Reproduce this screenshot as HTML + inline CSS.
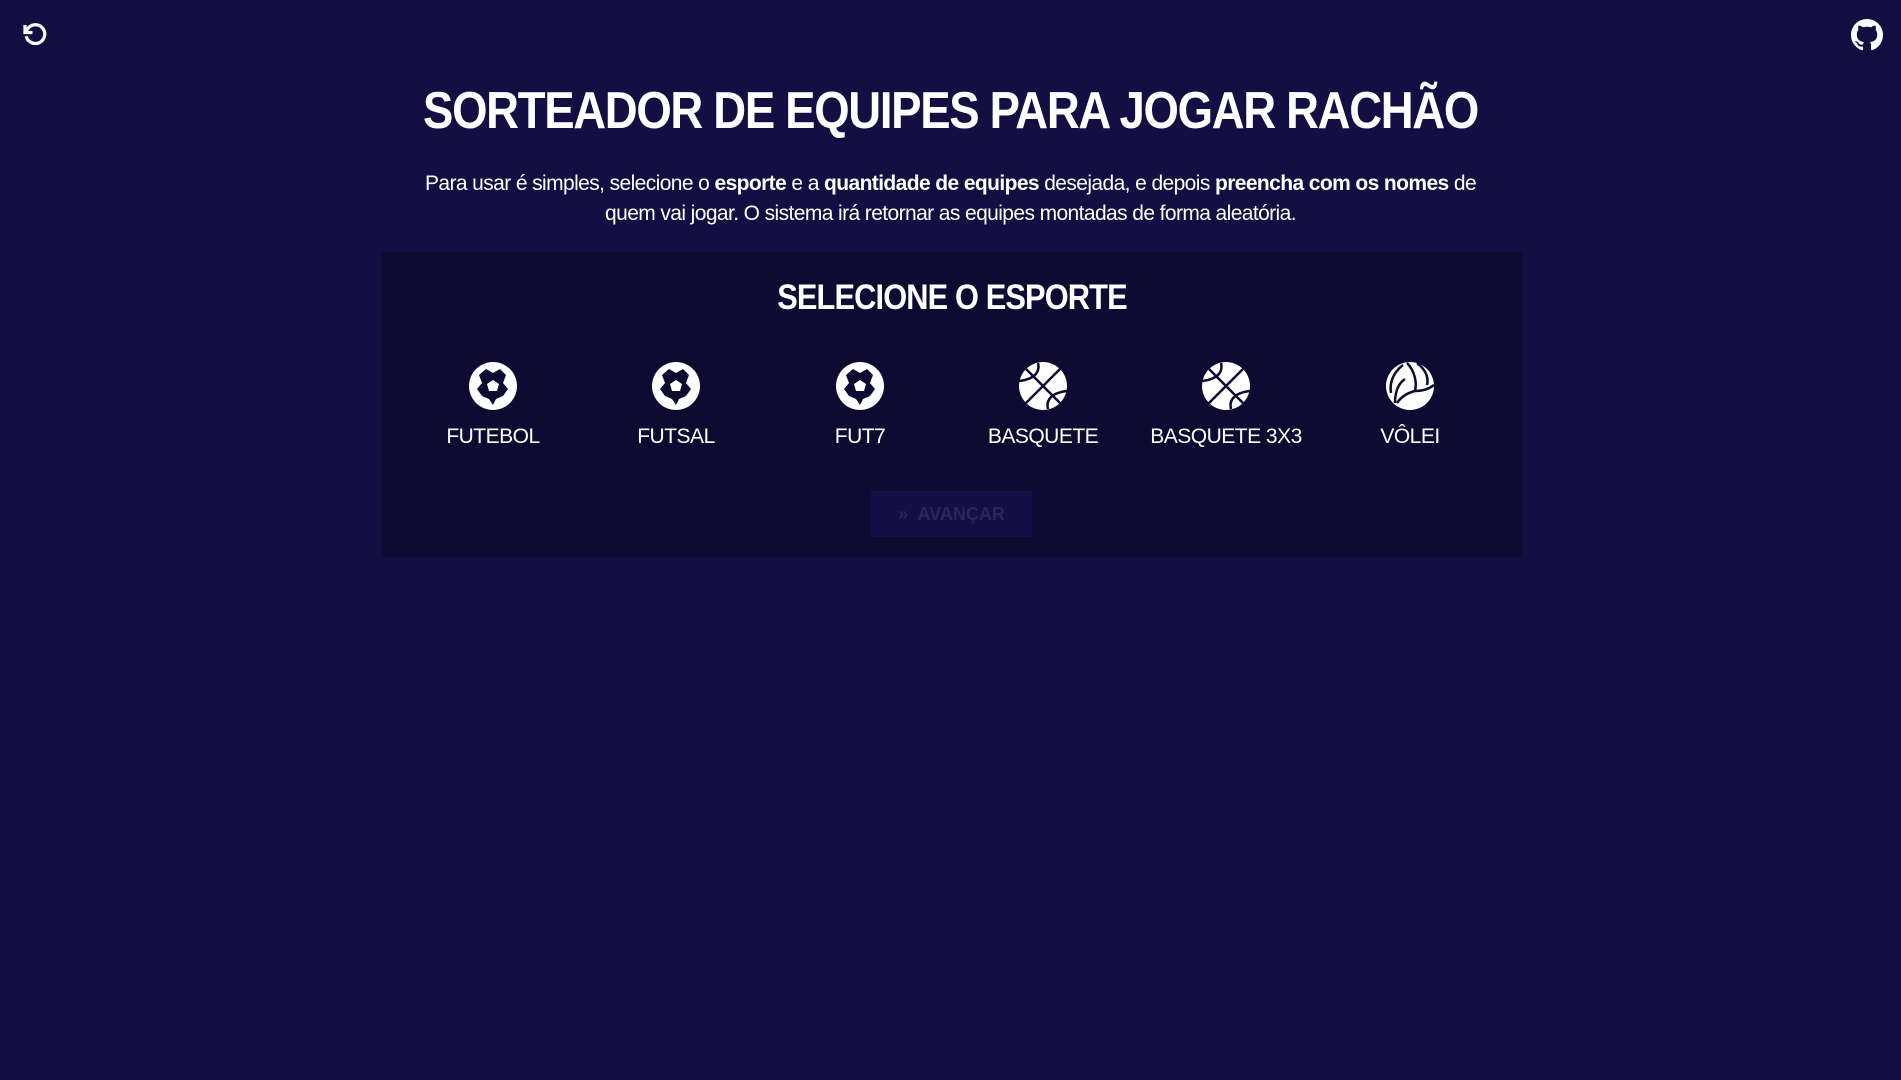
<!DOCTYPE html>
<html><head><meta charset="utf-8"><style>
html,body{margin:0;padding:0;width:1901px;height:1080px;background:#130f42;overflow:hidden;font-family:"Liberation Sans",sans-serif;color:#fff}
.abs{position:absolute}
h1{position:absolute;left:0;width:1901px;top:81px;margin:0;text-align:center;font-size:52px;font-weight:bold;letter-spacing:-1.5px;transform:scaleX(0.875);transform-origin:center}
.p{position:absolute;left:400px;width:1101px;top:169px;text-align:center;font-size:21px;line-height:30px;letter-spacing:-0.6px}
.panel{position:absolute;left:382px;top:252px;width:1140px;height:306px;background:#0e0b33}
.h2{position:absolute;left:0;width:1140px;top:26px;text-align:center;font-size:35px;font-weight:bold;letter-spacing:-1px;transform:scaleX(0.88)}
.sp{position:absolute;width:180px;text-align:center;top:109px}
.sp svg{display:block;margin:0 auto}
.sp div{font-size:21px;margin-top:14px;letter-spacing:-0.5px}
.btn{position:absolute;left:489px;top:239px;width:161px;height:46px;background:#150f45;color:#2a2660;font-size:18px;font-weight:bold;text-align:center;line-height:46px}
</style></head><body>
<svg class="abs" style="left:20px;top:20px" width="30" height="30" viewBox="0 0 24 24"><path d="M4 4v6h6" fill="none" stroke="#fff" stroke-width="2.6"/><path d="M5 13a7.5 7.5 0 1 0 2-7L4.5 9" fill="none" stroke="#fff" stroke-width="2.6"/></svg>
<svg class="abs" style="left:1851px;top:19px" width="32" height="32" viewBox="0 0 16 16"><path fill="#fff" d="M8 0C3.58 0 0 3.58 0 8c0 3.540 2.29 6.53 5.47 7.59.4.07.55-.17.55-.38 0-.19-.01-.82-.01-1.49-2.010.37-2.53-.49-2.69-.94-.09-.23-.48-.94-.82-1.130-.28-.15-.68-.52-.01-.53.63-.01 1.080.58 1.230.82.72 1.210 1.870.87 2.330.66.07-.52.28-.87.51-1.07-1.78-.2-3.64-.89-3.64-3.950 0-.87.31-1.59.82-2.15-.08-.2-.36-1.020.08-2.120 0 0 .67-.21 2.2.82.64-.18 1.32-.27 2-.27.68 0 1.36.09 2 .27 1.53-1.04 2.2-.82 2.2-.82.44 1.1.16 1.92.08 2.12.51.56.82 1.27.82 2.15 0 3.07-1.87 3.75-3.65 3.95.29.25.54.73.54 1.48 0 1.07-.01 1.93-.01 2.2 0 .21.15.46.55.38A8.013 8.013 0 0016 8c0-4.42-3.58-8-8-8z"/></svg>
<h1>SORTEADOR DE EQUIPES PARA JOGAR RACHÃO</h1>
<div class="p">Para usar é simples, selecione o <b>esporte</b> e a <b>quantidade de equipes</b> desejada, e depois <b>preencha com os nomes</b> de quem vai jogar. O sistema irá retornar as equipes montadas de forma aleatória.</div>
<div class="panel">
<div class="h2">SELECIONE O ESPORTE</div>
<div class="sp" style="left:21px"><svg width="50" height="50" viewBox="0 0 50 50"><circle cx="25" cy="25" r="24" fill="#fff"/><path d="M18 8l7 4 7-4 6 6-3 8 5 6-5 7-7 3-3 6-4-6-7-3-5-7 5-6-3-8z" fill="#0e0b33"/><path d="M25 19l6 4-2 7h-8l-2-7z" fill="#fff"/></svg><div>FUTEBOL</div></div>
<div class="sp" style="left:204px"><svg width="50" height="50" viewBox="0 0 50 50"><circle cx="25" cy="25" r="24" fill="#fff"/><path d="M18 8l7 4 7-4 6 6-3 8 5 6-5 7-7 3-3 6-4-6-7-3-5-7 5-6-3-8z" fill="#0e0b33"/><path d="M25 19l6 4-2 7h-8l-2-7z" fill="#fff"/></svg><div>FUTSAL</div></div>
<div class="sp" style="left:388px"><svg width="50" height="50" viewBox="0 0 50 50"><circle cx="25" cy="25" r="24" fill="#fff"/><path d="M18 8l7 4 7-4 6 6-3 8 5 6-5 7-7 3-3 6-4-6-7-3-5-7 5-6-3-8z" fill="#0e0b33"/><path d="M25 19l6 4-2 7h-8l-2-7z" fill="#fff"/></svg><div>FUT7</div></div>
<div class="sp" style="left:571px"><svg width="50" height="50" viewBox="0 0 50 50"><circle cx="25" cy="25" r="24" fill="#fff"/><g fill="none" stroke="#0e0b33" stroke-width="2.5"><path d="M8 8L42 42M42 8L8 42M20 2c2 8-2 16-19 18M30 48c-2-8 2-16 19-18"/></g></svg><div>BASQUETE</div></div>
<div class="sp" style="left:754px"><svg width="50" height="50" viewBox="0 0 50 50"><circle cx="25" cy="25" r="24" fill="#fff"/><g fill="none" stroke="#0e0b33" stroke-width="2.5"><path d="M8 8L42 42M42 8L8 42M20 2c2 8-2 16-19 18M30 48c-2-8 2-16 19-18"/></g></svg><div>BASQUETE 3X3</div></div>
<div class="sp" style="left:938px"><svg width="50" height="50" viewBox="0 0 50 50"><circle cx="25" cy="25" r="24" fill="#fff"/><g fill="none" stroke="#0e0b33" stroke-width="2.5"><path d="M22 2c8 8 10 20 8 28M30 30c8 0 14-2 19-6M30 30c-8 2-14 6-18 12M18 4c-8 6-14 16-12 28M32 2c8 6 12 14 10 22M20 18c-6 4-10 12-10 24"/></g></svg><div>VÔLEI</div></div>
<div class="btn">&#187;&nbsp; AVANÇAR</div>
</div>
</body></html>
